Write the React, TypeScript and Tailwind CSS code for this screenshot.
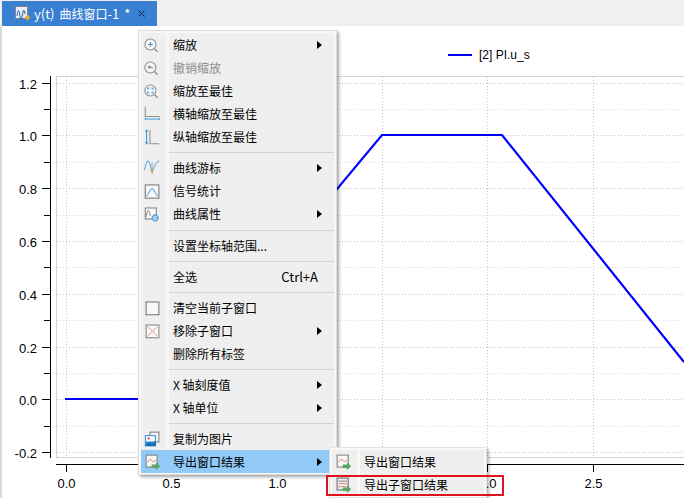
import type { ReactNode } from 'react';

const BLUE = '#3f9ad6';
const GRAY = '#8f8f8f';

function Ico({ children }: { children: ReactNode }) {
  return (
    <svg width="17" height="17" viewBox="0 0 20 20" fill="none">
      {children}
    </svg>
  );
}

const lens = (
  <>
    <circle cx="9.500" cy="9.500" r="6.500" stroke={GRAY} strokeWidth="1.300" fill="#f7f7f7" />
    <path d="M14.500 14.500L18 18" stroke={GRAY} strokeWidth="1.500" />
  </>
);

const icons: Record<string, ReactNode> = {
  zoom: (
    <Ico>
      <g transform="translate(-2 .5)">
        {lens}
        <path d="M6.500 9.500h6M9.500 6.500v6" stroke={BLUE} strokeWidth="1.200" />
      </g>
    </Ico>
  ),
  undo: (
    <Ico>
      <g transform="translate(-2 .5)">
        {lens}
        <path d="M6 9l3-2.500v1.700c2.500 0 4 1 4 3.300-1-1.200-2.200-1.400-4-1.400v1.400z" fill="#8a8a8a" />
      </g>
    </Ico>
  ),
  fit: (
    <Ico>
      <g transform="translate(-2 .5)">
        {lens}
        <path d="M6.500 8.500v-2h2M10.500 6.500h2v2M12.500 10.500v2h-2M8.500 12.500h-2v-2" stroke={BLUE} strokeWidth="1.200" />
      </g>
    </Ico>
  ),
  hfit: (
    <Ico>
      <path d="M1.500 2v11.500H18.500" stroke={GRAY} strokeWidth="1.300" />
      <path d="M1.500 16.500h16.500" stroke={BLUE} strokeWidth="1.200" />
      <path d="M1.500 15v3M18 15v3" stroke={BLUE} strokeWidth="1.200" />
    </Ico>
  ),
  vfit: (
    <Ico>
      <path d="M7 2v16.500H18" stroke={GRAY} strokeWidth="1.300" />
      <path d="M3 2v17" stroke={BLUE} strokeWidth="1.300" />
      <path d="M1.300 4.500L3 2l1.700 2.500M1.300 16.500L3 19l1.700-2.500" stroke={BLUE} strokeWidth="1.100" />
    </Ico>
  ),
  cursor: (
    <Ico>
      <path d="M0.500 13C2 5 3.500 2.500 5 2.500S7.500 8 8.500 12.500c1 3 3-1 3.500-3 .8-3 2-5.500 6-7.500" stroke="#63aedf" strokeWidth="1.300" />
      <path d="M9.500 3v15" stroke="#a8926a" strokeWidth="1" />
      <path d="M8 13h3l-1.500 3z" fill="#c08a2c" />
    </Ico>
  ),
  stats: (
    <Ico>
      <rect x="1.500" y="3.500" width="16" height="15.500" stroke="#7d7d7d" strokeWidth="1.300" fill="#f8f8f8" />
      <path d="M2.500 16.500c3 0 3.500-8.500 7-8.500s4 8.500 7 8.500" stroke="#5aa9df" strokeWidth="1.200" />
    </Ico>
  ),
  attr: (
    <Ico>
      <rect x="1.500" y="3.500" width="13" height="13" stroke="#7d7d7d" strokeWidth="1.200" fill="#f8f8f8" />
      <path d="M2.500 14c1.500-10 3.500-10 5-1" stroke="#7d7d7d" strokeWidth="1.100" />
      <circle cx="13" cy="15.300" r="3.200" stroke="#3f9ad6" strokeWidth="2.200" strokeDasharray="2 0.500" fill="#f8f8f8" />
      <circle cx="13" cy="15.300" r="1" fill="#3f9ad6" />
    </Ico>
  ),
  clear: (
    <Ico>
      <rect x="2.500" y="3.500" width="15" height="15" stroke="#7d7d7d" strokeWidth="1.300" fill="#f8f8f8" />
      <path d="M1 3.500h.8M1 18.500h.8M2.500 20h.8M16.500 20h.8" stroke="#a0a0a0" strokeWidth="1" />
    </Ico>
  ),
  remove: (
    <Ico>
      <rect x="2.500" y="3.500" width="15" height="15" stroke="#8a8a8a" strokeWidth="1.300" fill="#f8f8f8" />
      <path d="M4.500 5.500l11 11M15.500 5.500l-11 11" stroke="#e58a8a" strokeWidth="1.100" />
    </Ico>
  ),
  copy: (
    <Ico>
      <rect x="7" y="2.500" width="10.500" height="11.500" stroke="#7d7d7d" strokeWidth="1.200" fill="#f4f4f4" />
      <rect x="1" y="6" width="13" height="13" fill="#2f8fd8" />
      <rect x="2.200" y="7.200" width="10.600" height="6.300" fill="#ffffff" />
      <circle cx="5.500" cy="9.800" r="1.400" fill="#e2574c" />
      <path d="M1 19l4.500-5 3.500 2 5-3.500V19z" fill="#1a6fb5" />
    </Ico>
  ),
  exportWin: (
    <Ico>
      <rect x="2.500" y="2.500" width="13" height="14" stroke="#7d7d7d" strokeWidth="1.200" fill="#f8f8f8" />
      <path d="M4 11l3.500-4 3.500 3.500 3.500-2.500" stroke="#e2746f" strokeWidth="1.100" />
      <path d="M9 13.500h5V11l5 4.500-5 4.500v-2.500H9z" fill="#5aa764" />
    </Ico>
  ),
  exportSub: (
    <Ico>
      <rect x="2.500" y="2.500" width="13" height="14" stroke="#6f6f6f" strokeWidth="1.300" fill="#f0f0f0" />
      <path d="M4 6h10" stroke="#7d7d7d" strokeWidth="1.100" />
      <path d="M4 9.500l3.500-1 3.500 1 3-1M4 13l3.500-1 3.500 1 2-1" stroke="#e2746f" strokeWidth="1.100" />
      <path d="M9 13.500h5V11l5 4.500-5 4.500v-2.500H9z" fill="#5aa764" />
    </Ico>
  ),
};

type Row =
  | { sep: true; tall?: boolean }
  | { label: string; icon?: string; arrow?: boolean; disabled?: boolean; shortcut?: string; active?: boolean };

const menu: Row[] = [
  { label: '缩放', icon: 'zoom', arrow: true },
  { label: '撤销缩放', icon: 'undo', disabled: true },
  { label: '缩放至最佳', icon: 'fit' },
  { label: '横轴缩放至最佳', icon: 'hfit' },
  { label: '纵轴缩放至最佳', icon: 'vfit' },
  { sep: true },
  { label: '曲线游标', icon: 'cursor', arrow: true },
  { label: '信号统计', icon: 'stats' },
  { label: '曲线属性', icon: 'attr', arrow: true },
  { sep: true, tall: true },
  { label: '设置坐标轴范围...' },
  { sep: true },
  { label: '全选', shortcut: 'Ctrl+A' },
  { sep: true },
  { label: '清空当前子窗口', icon: 'clear' },
  { label: '移除子窗口', icon: 'remove', arrow: true },
  { label: '删除所有标签' },
  { sep: true },
  { label: 'X 轴刻度值', arrow: true },
  { label: 'X 轴单位', arrow: true },
  { sep: true },
  { label: '复制为图片', icon: 'copy' },
  { label: '导出窗口结果', icon: 'exportWin', arrow: true, active: true },
];

function MenuRow({ row }: { row: Row }) {
  if ('sep' in row) {
    return (
      <div className={`flex ${row.tall ? 'h-[9px]' : 'h-[8px]'}`}>
        <div className="w-[25px] bg-[#efefef]" />
        <div className={`ml-[3px] flex flex-1 bg-[#efefef] ${row.tall ? 'items-end pb-[3px]' : 'items-center'}`}>
          <div className="h-[1px] w-full bg-[#d3d3d3]" />
        </div>
      </div>
    );
  }
  return (
    <div className={`flex h-[23px] ${row.active ? 'bg-[#91c9f7]' : ''}`}>
      <div className={`flex w-[25px] items-center pl-[3px] ${row.active ? '' : 'bg-[#efefef]'}`}>
        {row.icon && icons[row.icon]}
      </div>
      <div className={`ml-[3px] flex flex-1 items-center pl-[4px] ${row.active ? '' : 'bg-[#efefef]'}`}>
        <span className={row.disabled ? 'text-[#8c8c8c]' : 'text-black'}>{row.label}</span>
        {row.shortcut && <span className="ml-auto mr-[16px] text-[13px] text-black">{row.shortcut}</span>}
        {row.arrow && (
          <svg className="ml-auto mr-[12px]" width="5" height="8" viewBox="0 0 5 8">
            <path d="M0 0l5 4-5 4z" fill="#000" />
          </svg>
        )}
      </div>
    </div>
  );
}

function Chart() {
  const yOf = (v: number) => Math.round(399.3 - 264 * v) + 0.5;
  const xOf = (t: number) => Math.round(66 + 210.6 * t) + 0.5;
  const yMajor = [1.2, 1.0, 0.8, 0.6, 0.4, 0.2, 0, -0.2];
  const yMinor = [1.1, 0.9, 0.7, 0.5, 0.3, 0.1, -0.1];
  const xMajor = [0, 0.5, 1, 1.5, 2, 2.5];
  // 1.5 的刻度文字被子菜单完全挡住
  const xLabels = [0, 0.5, 1, 2, 2.5];

  return (
    <svg width="682" height="472" viewBox="2 26 682 472" className="block font-['Liberation_Sans',sans-serif]">
      <g shapeRendering="crispEdges">
        {yMinor.map((v) => (
          <path key={v} d={`M57 ${yOf(v)}H684`} stroke="#dcdcdc" strokeDasharray="1 2" />
        ))}
        {yMajor.map((v) => (
          <path key={v} d={`M57 ${yOf(v)}H684`} stroke="#c4c4c4" strokeDasharray="1 2" />
        ))}
        {xMajor.map((t) => (
          <path key={t} d={`M${xOf(t)} 77V457`} stroke="#c4c4c4" strokeDasharray="1 2" />
        ))}
        <path d="M56.500 457V76.500H684M56 457.500H684" stroke="#d4d4d4" fill="none" />
        <path d="M50.500 76V458M56 464.500H684" stroke="#000" />
        {yMajor.map((v) => (
          <path key={v} d={`M42 ${yOf(v)}H50`} stroke="#000" />
        ))}
        {yMinor.map((v) => (
          <path key={v} d={`M44 ${yOf(v)}H50`} stroke="#000" />
        ))}
        {xMajor.map((t) => (
          <path key={t} d={`M${xOf(t)} 464V472`} stroke="#000" />
        ))}
      </g>
      {yMajor.map((v) => (
        <text key={v} x="37" y={yOf(v) + 5} textAnchor="end" fontSize="13" fill="#000">
          {v.toFixed(1)}
        </text>
      ))}
      {xLabels.map((t) => (
        <text key={t} x={xOf(t)} y="488" textAnchor="middle" fontSize="13" fill="#000">
          {t.toFixed(1)}
        </text>
      ))}
      <path d="M65 399H162L382 135H502L684 362" stroke="#0000ff" strokeWidth="2.200" fill="none" />
      <path d="M448 55H472" stroke="#0000ff" strokeWidth="2" />
      <text x="479" y="59" fontSize="12" fill="#000">
        [2] PI.u_s
      </text>
    </svg>
  );
}

export default function App() {
  return (
    <div className="relative flex h-[498px] w-[684px] flex-col overflow-hidden bg-white font-['Noto_Sans_CJK_SC','Noto_Sans',sans-serif] text-[12px]">
      {/* 标签栏 */}
      <div className="flex h-[26px] bg-[#f0f0f0] pl-[2px] pt-[1px]">
        <div className="flex w-[155px] items-center bg-[#3a80d2] pl-[13px] text-white">
          <svg width="16" height="16" viewBox="0 0 16 16" fill="none">
            <rect x="0.500" y="0.500" width="12" height="12" fill="#e8eef5" stroke="#7d8794" />
            <path d="M2 10c1-7 2-7 3 0s2 2 3-4c.7-3 1.500-1 2 2" stroke="#3a6db0" strokeWidth="1.100" />
            <path d="M10 11.500h5M12.500 9v5" stroke="#f0a830" strokeWidth="2.200" />
          </svg>
          <span className="ml-[3px] flex items-center">
            <span className="text-[13px]">y(t)</span>
            <span className="ml-[5px]">曲线窗口</span>
            <span className="text-[13px]">-1</span>
            <span className="ml-[5px] text-[13px]">*</span>
          </span>
          <svg className="ml-[8px]" width="7" height="7" viewBox="0 0 7 7">
            <path d="M.5.500l6 6M6.500.500l-6 6" stroke="#10243c" strokeWidth="1" />
          </svg>
        </div>
      </div>

      <div className="flex flex-1">
        <div className="w-[2px] bg-[#dadada]" />
        <Chart />
      </div>

      {/* 右键菜单 */}
      <div className="absolute left-[138px] top-[30px] w-[199px] border border-[#dcdcdc] bg-[#f8f8f8] px-[2px] pb-[1px] pt-[2px] shadow-[2px_2px_3px_rgba(0,0,0,0.35)]">
        {menu.map((row, i) => (
          <MenuRow key={i} row={row} />
        ))}
      </div>

      {/* 子菜单 */}
      <div className="absolute left-[329px] top-[447px] w-[158px] border border-[#e4e4e4] bg-[#f8f8f8] px-[2px] pt-[2px] pb-[1px] shadow-[2px_2px_3px_rgba(0,0,0,0.3)]">
        <MenuRow row={{ label: '导出窗口结果', icon: 'exportWin' }} />
        <MenuRow row={{ label: '导出子窗口结果', icon: 'exportSub' }} />
      </div>

      {/* 红框标注 */}
      <div className="absolute left-[326px] top-[475px] h-[21px] w-[178px] border-2 border-[#e0141e]" />
    </div>
  );
}
